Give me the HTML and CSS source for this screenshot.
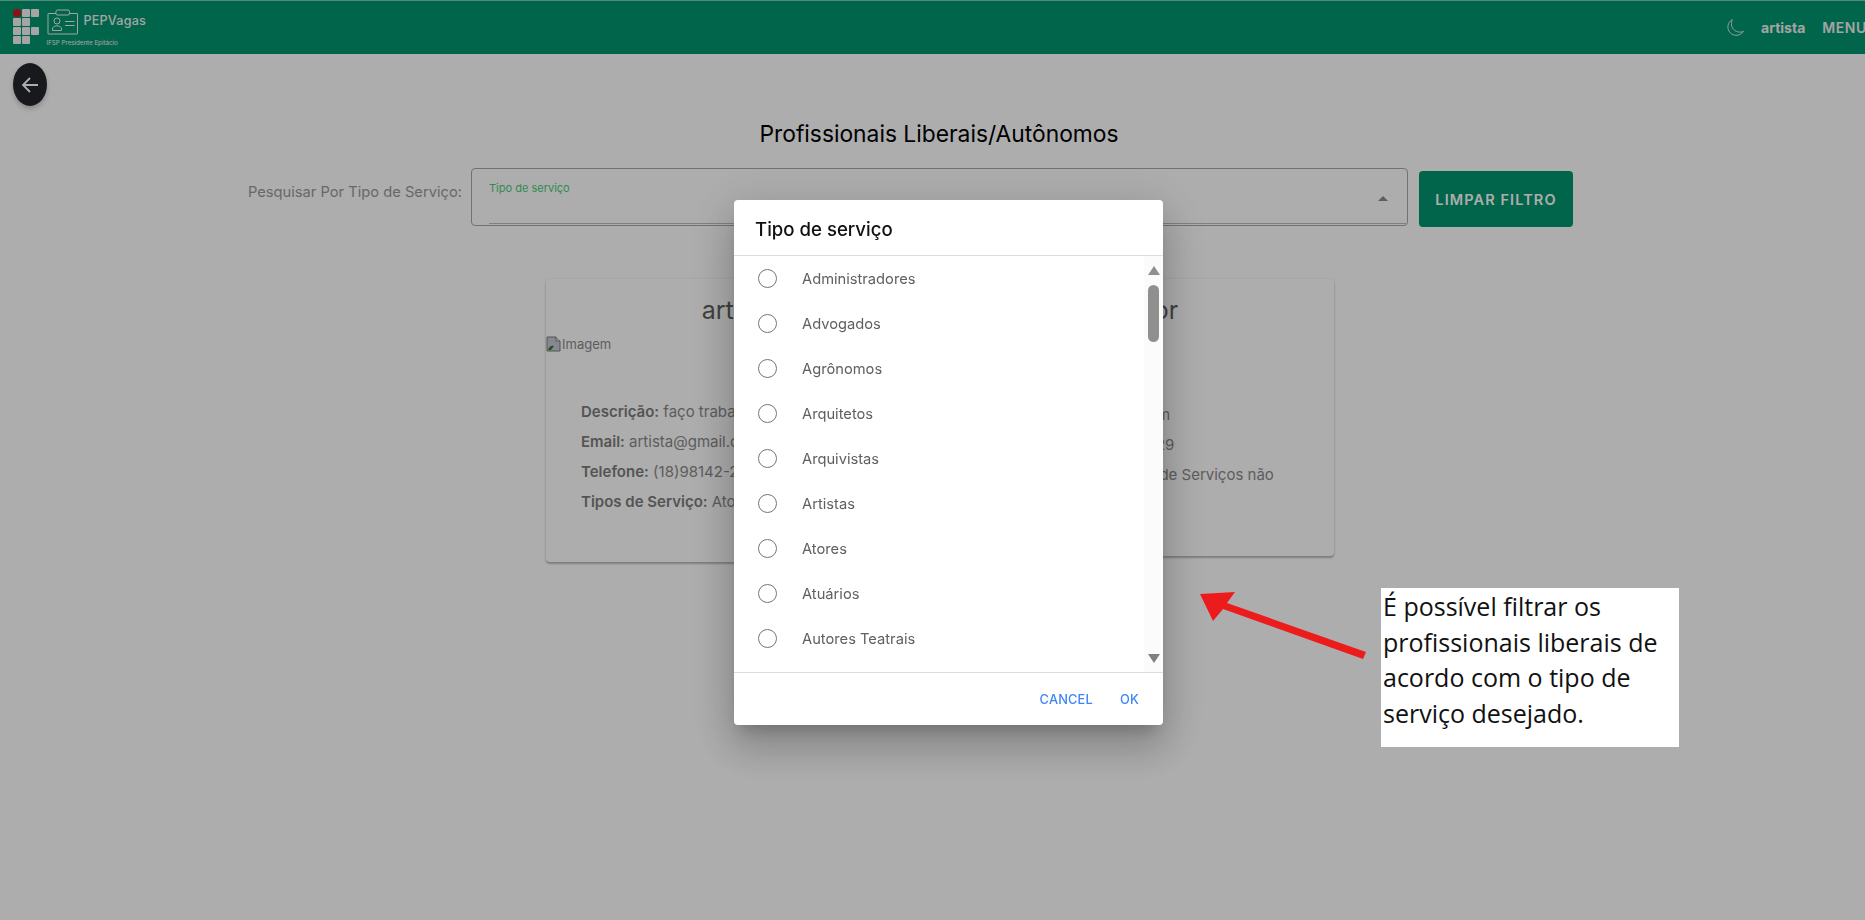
FILE: index.html
```html
<!DOCTYPE html>
<html lang="pt-BR">
    <head>
        <meta charset="UTF-8">
        <meta name="viewport" content="width=device-width, initial-scale=1.0">
        <title>PEPVagas</title>
        <link rel="stylesheet" href="styles.css">
    </head>

    <body>
        <header class="topbar">
            <div class="brand">
                <div class="ifsp-logo">
                    <span class="dot"></span><span></span><span></span>
                    <span></span><span></span><i></i>
                    <span></span><span></span><span></span>
                    <span></span><span></span><i></i>
                </div>
                <div class="brand-text">
                    <div class="brand-top">
                        <svg class="badge-icon" width="32" height="26" viewBox="0 0 32 26" fill="none" stroke="currentColor" stroke-width="1">
                            <rect x="1" y="4.5" width="29.5" height="20.5" rx="0.5"/>
                            <rect x="9" y="1" width="13.5" height="5" rx="1.5" fill="#00966e"/>
                            <circle cx="10" cy="12" r="3"/>
                            <path d="M5.5 21.5v-1.5c0-2 2-3.2 4.500-3.200s4.500 1.200 4.500 3.200v1.500z"/>
                            <path d="M18 12.500h9.500M18 16.500h9.500"/>
                        </svg>
                        <span class="brand-name">PEPVagas</span>
                    </div>
                    <div class="brand-sub">IFSP Presidente Epitácio</div>
                </div>
            </div>
            <div class="topbar-right">
                <svg class="moon" width="18" height="18" viewBox="0 0 18 18" fill="none" stroke="currentColor" stroke-width="0.800">
                    <path d="M6.500 1.500a7.500 7.500 0 1 0 10 10.500c-1 .6-2.300.8-3.500.7-4.200-.3-7.500-3.600-7.200-7.700.1-1.300.2-2.400.7-3.500z"/>
                </svg>
                <span class="user">artista</span>
                <span class="menu">MENU</span>
            </div>
        </header>

        <main class="content">
            <a class="back-btn" href="#">
                <svg width="18" height="18" viewBox="0 0 18 18" fill="none" stroke="#fff" stroke-width="1.800">
                    <path d="M17 9H2M9 2L2 9l7 7"/>
                </svg>
            </a>

            <h1 class="page-title">Profissionais Liberais/Autônomos</h1>

            <div class="filter-row">
                <label class="filter-label">Pesquisar Por Tipo de Serviço:</label>
                <div class="select-box">
                    <span class="select-label">Tipo de serviço</span>
                    <span class="select-arrow"></span>
                </div>
                <button class="clear-btn">LIMPAR FILTRO</button>
            </div>

            <div class="cards">
                <section class="card">
                    <h2>artista</h2>
                    <div class="broken-img">
                        <svg width="16" height="16" viewBox="0 0 16 16">
                            <path d="M1 1h9l4 4v10H1z" fill="#c5cbd3" stroke="#7d7d7d"/>
                            <path d="M10 1v4h4" fill="#eee" stroke="#7d7d7d"/>
                            <path d="M2 14c1-4 4-5 6-4l-3 4z" fill="#2f7d32"/>
                        </svg>
                        <span>Imagem</span>
                    </div>
                    <div class="card-info">
                        <p><b>Descrição:</b> faço trabalhos artísticos</p>
                        <p><b>Email:</b> artista@gmail.com</p>
                        <p><b>Telefone:</b> (18)98142-2929</p>
                        <p><b>Tipos de Serviço:</b> Atores</p>
                    </div>
                </section>
                <section class="card card-short">
                    <h2>Pintor</h2>
                    <div class="card-info">
                        <p><b>Email:</b> pintora@gmail.com</p>
                        <p><b>Telefone:</b> (18) 98142-2929</p>
                        <p><b>Tipos de Serviço:</b> Tipos de Serviços não informados</p>
                    </div>
                </section>
            </div>
        </main>

        <div class="backdrop">
            <div class="dialog">
                <h3 class="dialog-title">Tipo de serviço</h3>
                <div class="dialog-body">
                    <ul class="options">
                        <li><span class="radio"></span>Administradores</li>
                        <li><span class="radio"></span>Advogados</li>
                        <li><span class="radio"></span>Agrônomos</li>
                        <li><span class="radio"></span>Arquitetos</li>
                        <li><span class="radio"></span>Arquivistas</li>
                        <li><span class="radio"></span>Artistas</li>
                        <li><span class="radio"></span>Atores</li>
                        <li><span class="radio"></span>Atuários</li>
                        <li><span class="radio"></span>Autores Teatrais</li>
                    </ul>
                    <div class="scroller">
                        <span class="scroll-up"></span>
                        <span class="scroll-thumb"></span>
                        <span class="scroll-down"></span>
                    </div>
                </div>
                <div class="dialog-actions">
                    <button>CANCEL</button>
                    <button>OK</button>
                </div>
            </div>
        </div>

        <!-- anotacao colada por cima do print -->
        <svg class="red-arrow" width="170" height="72" viewBox="0 0 170 72">
            <path d="M0 7L35 5L27 16L166 65L163 72L23 22L13 34z" fill="#ed1c1c"/>
        </svg>
        <div class="note">É possível filtrar os profissionais liberais de acordo com o tipo de serviço desejado.</div>
    </body>
</html>
```

FILE: styles.css
```css
html, body {
    height: 100%;
    overflow: hidden;
}

body {
    margin: 0;
    background-color: #fff;
    font-family: Inter, "Noto Sans", sans-serif;
    color: #8a8a8a;
}

/* Top bar */
.topbar {
    height: 53px;
    border-top: 1px solid #7fc9b5;
    background-color: #00966e;
    display: flex;
    justify-content: space-between;
    align-items: stretch;
    color: #f2f2f2;
}

.brand {
    display: flex;
    padding: 8px 0 0 13px;
    gap: 8px;
}

.ifsp-logo {
    display: grid;
    grid-template-columns: repeat(3, 7.500px);
    grid-auto-rows: 7.500px;
    gap: 1.500px;
}

.ifsp-logo span {
    background-color: #f4f4f4;
    border-radius: 1px;
}

.ifsp-logo .dot {
    background-color: #cf1a20;
    border-radius: 50%;
}

.brand-top {
    display: flex;
    align-items: center;
    gap: 5px;
}

.badge-icon {
    display: block;
}

.brand-name {
    font-size: 12.600px;
    font-weight: 500;
    letter-spacing: 0.2px;
    margin-top: -3px;
}

.brand-sub {
    font-size: 6.200px;
    line-height: 8px;
    margin-top: 4px;
}

.topbar-right {
    display: flex;
    align-items: center;
    margin-right: -2px;
    font-weight: 600;
}

.moon {
    width: 20px;
    height: 20px;
    margin-right: 16px;
}

.user {
    font-size: 14px;
    font-weight: 700;
    margin-right: 17px;
}

.menu {
    font-size: 14px;
    letter-spacing: 0.6px;
}

/* Page */
.content {
    padding-left: 13px;
}

.back-btn {
    display: flex;
    align-items: center;
    justify-content: center;
    width: 34px;
    height: 43px;
    margin-top: 9px;
    border-radius: 50%;
    background-color: #24262b;
    box-shadow: 0 3px 5px rgba(0, 0, 0, 0.2);
}

.page-title {
    margin: 13px 0 0;
    font-size: 22.800px;
    line-height: 30px;
    font-weight: 400;
    text-align: center;
    color: #000;
}

.filter-row {
    display: flex;
    margin: 19px 0 0 235px;
}

.filter-label {
    width: 223px;
    font-size: 14.700px;
    line-height: 48px;
    white-space: nowrap;
    color: #9a9a9a;
}

.select-box {
    position: relative;
    box-sizing: border-box;
    width: 937px;
    height: 58px;
    border: 1px solid #a8a8a8;
    border-radius: 4px;
}

.select-box::after {
    content: "";
    position: absolute;
    left: 17px;
    right: 1px;
    bottom: 1px;
    border-bottom: 1px solid #bdbdbd;
}

.select-label {
    position: absolute;
    left: 17px;
    top: 12px;
    font-size: 11px;
    color: #45cf7a;
}

.select-arrow {
    position: absolute;
    right: 19px;
    top: 27px;
    border-left: 5px solid transparent;
    border-right: 5px solid transparent;
    border-bottom: 5px solid #8a8a8a;
}

.clear-btn {
    width: 154px;
    height: 56px;
    margin: 3px 0 0 11px;
    border: 0;
    border-radius: 4px;
    background-color: #00966e;
    color: #fff;
    font-family: inherit;
    font-size: 14.500px;
    font-weight: 600;
    letter-spacing: 1.100px;
}

.cards {
    display: grid;
    grid-template-columns: 388px 388px;
    gap: 12px;
    align-items: start;
    width: 788px;
    margin: 52px 0 0 533px;
}

.card {
    height: 283px;
    box-sizing: border-box;
    border-radius: 4px;
    box-shadow: 0 2px 2px rgba(0, 0, 0, 0.25), 0 0 3px rgba(0, 0, 0, 0.1);
}

.card-short {
    height: 277px;
}

.card h2 {
    margin: 0;
    padding-top: 15px;
    font-size: 25px;
    line-height: 32px;
    font-weight: 400;
    text-align: center;
    color: #5f5f5f;
}

.card:first-child h2 {
    padding-right: 3px;
}

.card-short h2 {
    padding-left: 7px;
}

.broken-img {
    display: flex;
    align-items: center;
    height: 18px;
    margin-top: 9px;
    font-size: 13px;
}

.card-info {
    padding: 48px 20px 0 35px;
    font-size: 15px;
    line-height: 22px;
}

.card-short .card-info {
    padding: 78px 20px 0 39px;
}

.card-info p {
    margin: 0 0 8px;
}

.card-info b {
    font-weight: 600;
    color: #7d7d7d;
}

/* Modal */
.backdrop {
    position: fixed;
    inset: 0;
    padding: 200px 0 0 734px;
    background-color: rgba(0, 0, 0, 0.32);
}

.dialog {
    width: 429px;
    height: 525px;
    display: flex;
    flex-direction: column;
    border-radius: 4px;
    background-color: #fff;
    box-shadow: 0 11px 15px -7px rgba(0, 0, 0, 0.2), 0 24px 38px 3px rgba(0, 0, 0, 0.14), 0 9px 46px 8px rgba(0, 0, 0, 0.12);
}

.dialog-title {
    height: 56px;
    margin: 0;
    padding-left: 21px;
    box-sizing: border-box;
    border-bottom: 1px solid #dcdcdc;
    font-size: 18.600px;
    font-weight: 500;
    line-height: 58px;
    color: #111;
}

.dialog-body {
    flex: 1;
    display: flex;
    min-height: 0;
}

.options {
    flex: 1;
    margin: 0;
    padding: 0 0 0 24px;
    list-style: none;
}

.options li {
    display: flex;
    align-items: center;
    height: 45px;
    font-size: 14.700px;
    color: #606060;
}

.radio {
    box-sizing: border-box;
    width: 19px;
    height: 19px;
    margin-right: 25px;
    border: 1px solid #757575;
    border-radius: 50%;
}

.scroller {
    width: 19px;
    display: flex;
    flex-direction: column;
    align-items: center;
    background-color: #fbfbfb;
}

.scroll-up {
    margin-top: 10px;
    border-left: 6.500px solid transparent;
    border-right: 6.500px solid transparent;
    border-bottom: 9px solid #8f8f8f;
}

.scroll-thumb {
    width: 11px;
    height: 57px;
    margin-top: 10px;
    border-radius: 6px;
    background-color: #8f8f8f;
}

.scroll-down {
    margin-top: auto;
    margin-bottom: 9px;
    border-left: 6.500px solid transparent;
    border-right: 6.500px solid transparent;
    border-top: 9px solid #808080;
}

.dialog-actions {
    height: 53px;
    box-sizing: border-box;
    border-top: 1px solid #dcdcdc;
    display: flex;
    justify-content: flex-end;
    align-items: center;
    gap: 27px;
    padding-right: 24px;
}

.dialog-actions button {
    padding: 0;
    border: 0;
    background: none;
    color: #3f86f5;
    font-family: inherit;
    font-size: 12.800px;
    font-weight: 500;
    letter-spacing: 0.2px;
}

/* Annotation */
.red-arrow {
    position: fixed;
    left: 1200px;
    top: 587px;
}

.note {
    position: fixed;
    left: 1381px;
    top: 588px;
    box-sizing: border-box;
    width: 298px;
    height: 159px;
    padding: 1px 0 0 2px;
    background-color: #fff;
    font-family: "Open Sans", sans-serif;
    font-size: 25px;
    line-height: 35.500px;
    color: #111;
}
```
